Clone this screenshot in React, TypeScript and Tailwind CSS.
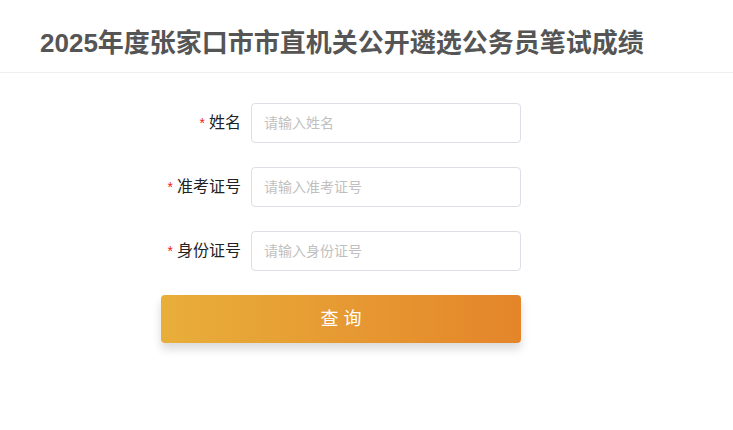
const FONT = "font-['Liberation_Sans','Noto_Sans_CJK_SC',sans-serif]";

const fields = [
  { label: "姓名", placeholder: "请输入姓名" },
  { label: "准考证号", placeholder: "请输入准考证号" },
  { label: "身份证号", placeholder: "请输入身份证号" },
];

export default function App() {
  return (
    <div className={`${FONT} w-[733px] h-[430px] bg-white`}>
      <div className="h-[73px] border-b border-[#eeeeee] pl-[40px] pt-[14px] flex items-center">
        <h1 className="text-[26px] font-bold text-[#555555] leading-none">
          2025年度张家口市市直机关公开遴选公务员笔试成绩
        </h1>
      </div>

      <div className="flex flex-col gap-6 w-[360px] ml-[161px] mt-[30px]">
        {fields.map((f) => (
          <div key={f.label} className="flex items-center">
            <label className="w-[90px] pr-[10px] text-right text-[16px] text-[#222222] whitespace-nowrap">
              <span className="text-[#f01c1c] text-[14px] mr-[4px]">*</span>
              {f.label}
            </label>
            <input
              type="text"
              placeholder={f.placeholder}
              className="w-[270px] h-[40px] rounded border border-[#dcdfe6] px-[12px] text-[14px] text-[#606266] placeholder:text-[#bfbfbf] outline-none"
            />
          </div>
        ))}

        <button className="h-[48px] w-[360px] rounded bg-gradient-to-r from-[#e8ae3a] to-[#e4852a] text-white text-[18px] tracking-[5px] pl-[5px] shadow-[0_6px_10px_rgba(0,0,0,0.15)]">
          查询
        </button>
      </div>
    </div>
  );
}
